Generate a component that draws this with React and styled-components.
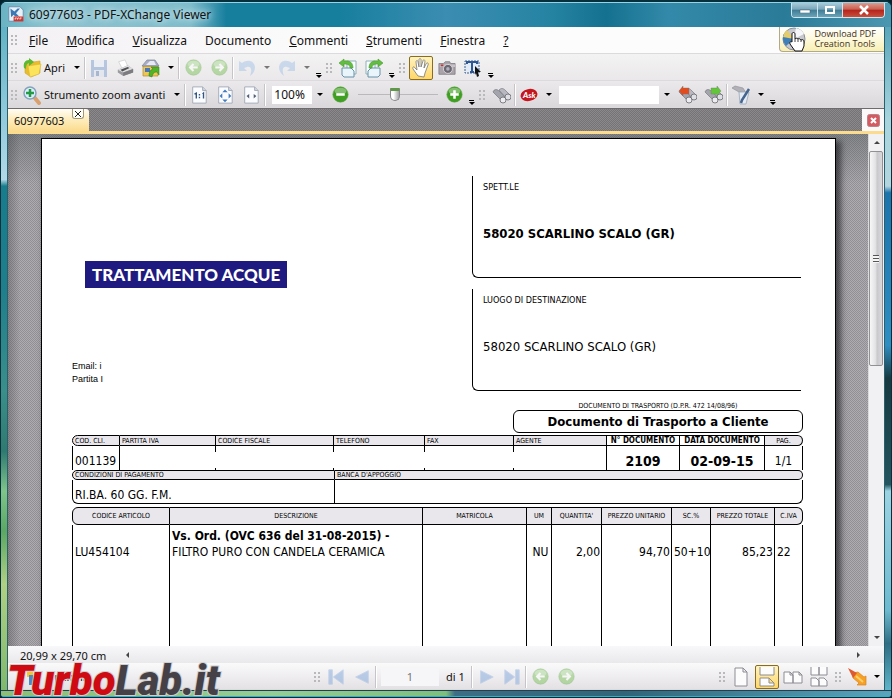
import React from 'react';
import styled, { createGlobalStyle, css } from 'styled-components';

const GlobalStyle = createGlobalStyle`
    * {
        box-sizing: border-box;
    }
    body {
        margin: 0;
        background: #04222b;
        color: #111;
        font-family: 'Noto Sans', 'Open Sans', sans-serif;
        font-size: 11px;
    }
    button, input {
        font: inherit;
        color: inherit;
    }
    button {
        border: 0;
        padding: 0;
        background: none;
    }
    svg {
        display: block;
        flex: none;
    }
`;

/* ---------- window frame ---------- */

const Window = styled.div`
    position: relative;
    display: flex;
    flex-direction: column;
    height: 100vh;
    min-height: 400px;
    overflow: hidden;
    border: 1px solid #06303c;
    border-top-width: 2px;
    border-radius: 7px 7px 4px 4px;
    background: #2a8aa6;
`;

const TitleBar = styled.header`
    display: flex;
    align-items: flex-start;
    flex: none;
    height: 25px;
    padding: 0 6px 0 7px;
    border-top: 1px solid #9ad4e4;
    background: linear-gradient(90deg, #69b3c4 0, #8fc3d0 50px, #7fbccb 190px, #177f9e 225px, #177f9e 38%, #3b8db1 50%, #2583a2 62%, #14718f 68%, #3389a9 75%, #2a7b98 88%, #4b96b0 100%);
`;

const WindowTitle = styled.h1`
    display: flex;
    align-items: center;
    gap: 5px;
    flex: 1;
    height: 22px;
    margin: 0;
    font-size: 12px;
    font-weight: 400;
    text-shadow: 0 0 6px #d8f0f5, 0 0 8px #bfe2ea;
`;

const WindowButtons = styled.div`
    display: flex;
    height: 15px;
    border: 1px solid #cfe6ee;
    border-top: 0;
    border-radius: 0 0 4px 4px;
    overflow: hidden;
`;

const WindowButton = styled.button`
    display: grid;
    place-items: center;
    width: ${p => (p.$close ? 42 : 25)}px;
    border-left: ${p => (p.$first ? '0' : '1px solid #cfe6ee')};
    background: ${p =>
        p.$close
            ? 'linear-gradient(#dd9a8e 0, #c9604f 45%, #b5221c 50%, #c8503c 100%)'
            : 'linear-gradient(#a9cbd8 0, #79a7ba 45%, #3f7c95 50%, #6ba4b8 100%)'};
`;

const Body = styled.div`
    display: flex;
    flex: 1;
    min-height: 0;
`;

const Edge = styled.div`
    flex: none;
    width: 7px;
    border: solid #2b5f6c;
    border-width: 0 ${p => (p.$right ? '0' : '1px')} 0 ${p => (p.$right ? '1px' : '0')};
    background: ${p =>
        p.$right
            ? 'linear-gradient(#5aa6ba 0, #a8d4de 14%, #b4d6de 24%, #1c74ad 25%, #2e8ec2 48%, #17393f 53%, #24555e 69%, #9cd3e2 70%, #6db9cf 88%, #2f6d83 93%, #5eb4c9 100%)'
            : 'linear-gradient(#62b2c5 0, #8cc8da 12%, #b3d9e8 23%, #177c8c 24%, #1f7f8c 40%, #3a8f8a 55%, #2f7a70 64%, #7fc489 70%, #5ba763 76%, #b0d083 84%, #7fb86d 100%)'};
`;

const BottomEdge = styled.div`
    flex: none;
    height: 7px;
    border-top: 1px solid #243f4d;
    border-bottom: 1px solid #2fb2c8;
    background: linear-gradient(90deg, #8dbd77 0, #93ce96 30%, #7dbf7f 50%, #3c6f86 51%, #316579 70%, #58a5bd 100%);
`;

const Client = styled.main`
    display: flex;
    flex-direction: column;
    flex: 1;
    min-width: 0;
    background: #f4f3f5;
`;

/* ---------- bars ---------- */

const Bar = styled.div`
    display: flex;
    align-items: center;
    flex: none;
    height: 27px;
    padding-top: 1px;
    border-bottom: 1px solid #dcdadd;
    background: ${p => p.$bg || 'linear-gradient(#f4f3f3, #eae8ea)'};
`;

const MenuBar = styled(Bar)`
    padding-top: 0;
`;

const Grip = styled.span`
    flex: none;
    width: 12px;
    height: 12px;
    background: radial-gradient(circle, #b9b8bb 1px, transparent 1px) 2px 0 / 4px 4px;
    background-clip: content-box;
    padding: 0 2px;
`;

const Sep = styled.span`
    flex: none;
    width: 2px;
    height: 22px;
    border-left: 1px solid #c6c4c8;
    border-right: 1px solid #fff;
`;

const IconButton = styled.button`
    display: grid;
    place-items: center;
    flex: none;
    width: 26px;
    height: 24px;
    opacity: ${p => (p.$dim ? 0.5 : 1)};
    ${p =>
        p.$active &&
        css`
            width: 24px;
            margin: 0 1px;
            border: 1px solid #8a6d1c;
            border-radius: 2px;
            background: linear-gradient(#fff3c0, #ffd768);
        `}
`;

const ArrowButton = styled.button`
    display: grid;
    place-items: center;
    flex: none;
    width: 14px;
    height: 22px;
    &::before {
        content: '';
        border: 3px solid transparent;
        border-top-color: ${p => (p.$dim ? '#777' : '#000')};
        border-bottom: 0;
    }
`;

const MoreButton = styled.button`
    display: flex;
    flex-direction: column;
    align-items: center;
    justify-content: flex-end;
    flex: none;
    width: 9px;
    height: 20px;
    &::before {
        content: '';
        width: 5px;
        height: 1px;
        background: #000;
    }
    &::after {
        content: '';
        margin-top: 1px;
        border: 3px solid transparent;
        border-top-color: #000;
        border-bottom: 0;
    }
`;

const LabelButton = styled.button`
    display: flex;
    align-items: center;
    gap: 2px;
    flex: none;
    height: 24px;
    padding: 0 5px 0 2px;
    white-space: nowrap;
`;

const MenuLink = styled.a`
    display: inline-block;
    padding: 1px 9px 0;
    color: inherit;
    font-size: 12px;
    line-height: 20px;
    text-decoration: none;
`;

const Promo = styled.a`
    display: flex;
    align-items: center;
    align-self: flex-start;
    gap: 7px;
    height: 25px;
    margin-left: auto;
    padding: 0 8px 0 2px;
    border: 1px solid #b1a98c;
    border-width: 0 0 1px 1px;
    border-radius: 0 0 0 4px;
    background: linear-gradient(#fff 0, #fdf9dc 50%, #f8efb4 100%);
    color: #3d2f1a;
    font-family: 'Open Sans', sans-serif;
    font-size: 9px;
    line-height: 10px;
    text-decoration: none;
`;

const Field = styled.input`
    width: ${p => p.$width}px;
    height: 18px;
    margin: 0 1px 0 ${p => p.$gap || 3}px;
    padding: 0 2px;
    border: 0;
    background: #fff;
`;

const ZoomField = styled(Field)`
    font-size: 12px;
`;

const ZoomSlider = styled.input`
    appearance: none;
    width: 80px;
    height: 18px;
    margin: 0 3px 0 5px;
    background: linear-gradient(#b9b8bb, #b9b8bb) center / 100% 1px no-repeat;
    &::-webkit-slider-thumb {
        appearance: none;
        width: 10px;
        height: 13px;
        border: 1px solid #88888c;
        border-top: 3px solid #5f9846;
        border-radius: 1px 1px 5px 5px;
        background: linear-gradient(90deg, #fff 30%, #a4a4a8 100%);
    }
`;

/* ---------- tabs ---------- */

const mesh = (a, b) => `repeating-conic-gradient(${a} 0 25%, ${b} 0 50%) 0 0 / 2px 2px`;

const TabStrip = styled.div`
    display: flex;
    align-items: stretch;
    justify-content: space-between;
    flex: none;
    height: 26px;
    border-top: 1px solid #6d6b6e;
    border-bottom: 3px solid #fbdc8f;
    background: ${mesh('#8b898b', '#757376')};
`;

const Tab = styled.div`
    display: flex;
    align-items: flex-start;
    border-radius: 0 3px 0 0;
    background: linear-gradient(#fffdf5 0, #fdeebf 45%, #fbdc8f 100%);
`;

const TabName = styled.button`
    padding: 3px 8px 0 6px;
    line-height: 18px;
`;

const TabClose = styled.button`
    display: grid;
    place-items: center;
    width: 12px;
    height: 10px;
    margin-right: 5px;
    border: 1px solid #a39879;
    border-top: 0;
    border-radius: 0 0 3px 3px;
    background: #fffef8;
`;

const CloseDocument = styled.button`
    display: grid;
    place-items: center;
    width: 22px;
    background: #fbf9fa;
`;

/* ---------- document view ---------- */

const View = styled.section`
    display: flex;
    flex: 1;
    min-height: 0;
`;

const Desk = styled.div`
    flex: 1;
    min-width: 0;
    padding: 4px 32px 0 33px;
    overflow: hidden;
    background: linear-gradient(rgba(70, 80, 80, .4), transparent 50px), linear-gradient(90deg, rgba(60, 60, 65, .35), transparent 12px), ${mesh('#aeacb0', '#918f94')};
`;

const Page = styled.article`
    min-height: 1120px;
    padding: 37px 32px 0 30px;
    border: 1px solid #000;
    background: #fff;
    box-shadow: 4px 4px 6px 1px rgba(20, 20, 25, .65);
    color: #000;
    font-family: 'DejaVu Sans Condensed', 'DejaVu Sans', sans-serif;
`;

const Scroller = styled.div`
    display: flex;
    flex-direction: column;
    flex: none;
    width: 16px;
    border-left: 1px solid #dcdadd;
    background: #f1f0f3;
`;

const ScrollArrow = styled.button`
    display: grid;
    place-items: center;
    flex: none;
    width: 15px;
    height: 17px;
    &::before {
        content: '';
        border: 3px solid transparent;
        border-${p => p.$from}-color: #444;
        border-${p => p.$flat}: 0;
    }
`;

const Track = styled.div`
    flex: 1;
`;

const Thumb = styled.div`
    display: grid;
    place-items: center;
    height: 45%;
    margin-right: 1px;
    border: 1px solid #919094;
    border-radius: 2px;
    background: linear-gradient(90deg, #f7f7f8 0, #e3e2e5 45%, #c9c8cc 60%, #dad9dc 100%);
    &::before {
        content: '';
        width: 6px;
        height: 8px;
        background: repeating-linear-gradient(#555 0 1px, #f5f5f5 1px 3px);
    }
`;

const HorizontalBar = styled.div`
    display: flex;
    align-items: center;
    flex: none;
    height: 17px;
    padding-top: 1px;
    padding-right: 18px;
    background: linear-gradient(#f8f7f9, #e9e8eb);
`;

const PageSize = styled.span`
    padding: 0 14px 0 12px;
`;

/* ---------- delivery note ---------- */

const Letterhead = styled.div`
    display: grid;
    grid-template-columns: 400fr 331fr;
`;

const Brand = styled.div`
    display: inline-block;
    margin: 85px 0 0 13px;
    padding: 0 7px;
    background: #1e1a80;
    color: #fff;
    font-family: Lato, sans-serif;
    font-size: 17px;
    font-weight: 900;
    line-height: 27px;
`;

const Contact = styled.p`
    margin: 72px 0 0;
    font-family: 'Liberation Sans', sans-serif;
    font-size: 9px;
    line-height: 13px;
`;

const AddressBox = styled.div`
    height: 102px;
    margin: 0 2px 11px 0;
    padding: 5px 10px;
    border: 1px solid #000;
    border-width: 0 0 1px 1px;
    border-radius: 0 0 0 6px;
    font-size: 13px;
    h2 {
        margin: 0 0 33px;
        font-size: 9px;
        font-weight: 400;
        line-height: 12px;
    }
    p {
        margin: 0;
        line-height: 16px;
        font-weight: ${p => (p.$bold ? 700 : 400)};
    }
`;

const Heading = styled.div`
    width: 290px;
    margin: 0 0 2px auto;
    text-align: center;
    small {
        display: block;
        font-size: 7px;
        line-height: 8px;
    }
    strong {
        display: block;
        border: 1px solid #000;
        border-radius: 6px;
        font-size: 13px;
        line-height: 21px;
    }
`;

const Table = styled.table`
    width: 100%;
    table-layout: fixed;
    border-collapse: separate;
    border-spacing: 0;
    font-size: 12px;
    th {
        height: ${p => p.$head || 11}px;
        padding: 0 2px;
        border: solid #000;
        border-width: 1px 1px 1px 0;
        background: #e9e7ec;
        font-size: 7px;
        font-weight: 400;
        line-height: 8px;
        text-align: ${p => p.$align || 'left'};
        white-space: nowrap;
    }
    th:first-child {
        border-left-width: 1px;
        border-radius: 6px 0 0 6px;
    }
    th:last-child {
        border-radius: 0 6px 6px 0;
    }
    td {
        height: 24px;
        padding: 6px 0 0 2px;
        border-right: 1px solid #000;
        line-height: 16px;
        white-space: nowrap;
    }
    td:first-child {
        border-left: 1px solid #000;
    }
`;

const StrongHead = styled.th`
    && {
        background: #fff;
        font-size: 8px;
        font-weight: 700;
        text-align: center;
    }
`;

const CenterHead = styled.th`
    && {
        text-align: center;
    }
`;

const NumberCell = styled.td`
    && {
        padding-left: 0;
        font-size: ${p => (p.$bold ? 14 : 12)}px;
        font-weight: ${p => (p.$bold ? 700 : 400)};
        text-align: center;
    }
`;

// empty cell: the divider is only hinted at both ends
const OpenCell = styled.td`
    && {
        border-right: 0;
        background:
            linear-gradient(#000, #000) right top / 1px 6px no-repeat,
            linear-gradient(#000, #000) right bottom / 1px 2px no-repeat;
    }
`;

const PaymentTable = styled(Table)`
    margin-bottom: 3px;
    td {
        border-bottom: 1px solid #000;
    }
    td:first-child {
        border-radius: 0 0 0 6px;
    }
    td:last-child {
        border-radius: 0 0 6px 0;
    }
`;

const ItemTable = styled(Table)`
    td {
        height: 600px;
        padding: 3px 2px 0;
        vertical-align: top;
        text-align: left;
    }
    td:nth-child(n + 5) {
        padding: 3px 1px 0 2px;
        text-align: right;
    }
    td:last-child {
        text-align: left;
    }
`;

/* ---------- status bar ---------- */

const StatusLeft = styled.div`
    flex: none;
    width: 303px;
    padding-left: 14px;
`;

const PageCount = styled.span`
    width: 30px;
    padding-left: 5px;
    white-space: nowrap;
`;

const Spacer = styled.span`
    flex: 1;
`;

const PageInput = styled(Field)`
    margin: 0 2px 0 4px;
    background: #f6f5f7;
    color: #777;
    text-align: center;
`;

const Watermark = styled.div`
    position: absolute;
    left: 6px;
    bottom: -1px;
    color: #cf0a12;
    font-family: Roboto, sans-serif;
    font-size: 42px;
    font-style: italic;
    font-weight: 900;
    line-height: 34px;
    paint-order: stroke fill;
    -webkit-text-stroke: 2px #cfcfcf;
    span {
        color: #454147;
    }
`;

/* ---------- drawings ---------- */

const Svg = ({ s = 20, children }) => (
    <svg width={s} height={s} viewBox='0 0 20 20' aria-hidden='true'>{children}</svg>
);

const AppIcon = () => (
    <Svg s={16}>
        <path d='M1 1h14l4 4v14H1z' fill='#e8f1f8' stroke='#5d83a6' />
        <path d='M3 3l5 4 4-4h3l-5 6 4 4H9l-2-2-3 3z' fill='#3c78b4' />
        <path d='M7 13h12v6H7z' fill='#d63228' />
        <path d='M9 17v-2h2M12 17v-2h2M15 17v-2h2' stroke='#fff' fill='none' />
    </Svg>
);

const FolderIcon = () => (
    <Svg>
        <path d='M3 5l6-3 2 2 7-1v12l-9 4-6-4z' fill='#e9bc2c' stroke='#d0a62a' strokeWidth='.6' />
        <path d='M6 8l13-2-2 10-9 3z' fill='#fbe45c' stroke='#dcb73a' strokeWidth='.6' />
        <path d='M2 10c-1-5 1-8 5-8V0l5 4-5 4V5C5 5 4 7 4 11z' fill='#5bb832' />
    </Svg>
);

const SaveIcon = () => (
    <Svg>
        <path d='M2 2h16v17H2z' fill='#7f9fcf' />
        <path d='M5 2h10v7H5z' fill='#e8eef8' />
        <path d='M5 12h10v7H5z' fill='#dbe3f0' />
        <path d='M7 13h3v5H7z' fill='#6684b4' />
    </Svg>
);

const PrintIcon = () => (
    <Svg s={18}>
        <path d='M3 3l7-2 3 7-6 3z' fill='#fff' stroke='#c5c5c8' strokeWidth='.7' />
        <path d='M2 12l11-5 6 4v4L8 19l-6-4z' fill='#9a9a9f' />
        <path d='M2 12l11-5 6 4-11 4z' fill='#dededf' />
        <path d='M5 12l8-3 2 1-8 4z' fill='#4e4e53' />
        <path d='M8 15l11-4v4L8 19z' fill='#7b7b80' />
    </Svg>
);

const HouseIcon = () => (
    <Svg>
        <path d='M2 8h15v10H2z' fill='#edc653' stroke='#b08d35' strokeWidth='.7' />
        <path d='M1 8l5-6h8l4 6z' fill='#a9aec4' stroke='#7d819a' strokeWidth='.7' />
        <path d='M5 7l4-4h4l2 4z' fill='#e8eaf2' />
        <path d='M4 10h5v4H4z' fill='#4976bb' />
        <path d='M8 18c0-4 1-6 4-7l-2-2h8v8l-2-3c-3 0-4 1-5 5z' fill='#4fb42a' stroke='#2d7d14' strokeWidth='.5' />
    </Svg>
);

const BallIcon = ({ sign, tone = '#7cc35c' }) => (
    <Svg s={17}>
        <circle cx='10' cy='10' r='9' fill={tone} stroke='#5aa142' strokeWidth='.7' />
        <ellipse cx='10' cy='6' rx='7' ry='4' fill='#fff' opacity='.35' />
        {sign === 'plus' && <path d='M10 5v10M5 10h10' stroke='#fff' strokeWidth='3' />}
        {sign === 'minus' && <path d='M5 10h10' stroke='#fff' strokeWidth='3' />}
        {sign === 'left' && <path d='M15 10H7m3-4l-4 4 4 4' stroke='#fff' strokeWidth='2.5' fill='none' />}
        {sign === 'right' && <path d='M5 10h8m-3-4l4 4-4 4' stroke='#fff' strokeWidth='2.5' fill='none' />}
    </Svg>
);

const UndoIcon = ({ flip }) => (
    <Svg>
        <g transform={flip ? 'matrix(-1 0 0 1 20 0)' : undefined}>
            <path d='M2 3l3 2c5-4 12-3 13 4 0 4-2 7-5 9 2-5 2-10-3-9l-3 1 3 3H2z' fill='#a6c3e9' />
        </g>
    </Svg>
);

const RotateIcon = ({ flip }) => (
    <Svg>
        <g transform={flip ? 'matrix(-1 0 0 1 20 0)' : undefined}>
            <path d='M9 3h9v13H9z' fill='#f8fcff' stroke='#8fb0b8' />
            <path d='M4 10h9l3 3v6H6l-2-2z' fill='#eaf5fb' stroke='#6792aa' />
            <path d='M1 5l5-4v2c6-1 9 2 9 7h-3c0-3-2-4-6-4v3z' fill='#62bd42' stroke='#4a9b30' strokeWidth='.6' />
        </g>
    </Svg>
);

const HandIcon = () => (
    <Svg>
        <path d='M7 18L2 11c-1-2 1-3 2-1l2 2-1-8c0-2 2-2 2 0l1 5V2c0-2 2-2 2 0v7l2-6c0-2 2-1 2 0l-1 7 2-4c1-2 3-1 2 1l-3 8-1 4z' fill='#fff' stroke='#777' strokeWidth='.8' />
    </Svg>
);

const CameraIcon = () => (
    <Svg s={18}>
        <path d='M1 5h5l2-2h5l1 2h5v12H1z' fill='#aaa4aa' stroke='#78747c' strokeWidth='.8' />
        <path d='M2 6h17v3H2z' fill='#c7c1c8' />
        <circle cx='11' cy='11' r='5' fill='#6c6870' stroke='#dcd8dd' />
        <circle cx='11' cy='11' r='2' fill='#b2afc0' />
        <path d='M3 7h3' stroke='#b83a3a' strokeWidth='2' />
    </Svg>
);

const SelectIcon = () => (
    <Svg>
        <path d='M2 3h14v12H2z' fill='#e3ebf6' stroke='#3e5f91' strokeDasharray='2 1' />
        <path d='M4 6V4h10v2M9 4v10M7 14h4' stroke='#2e5794' strokeWidth='2' fill='none' />
        <path d='M12 8l6 6h-3l1 4-2 1-1-4-1 2z' fill='#111' />
    </Svg>
);

const MagnifierIcon = () => (
    <Svg>
        <path d='M12 12l5 6' stroke='#d9a06e' strokeWidth='4' strokeLinecap='round' />
        <circle cx='8' cy='8' r='6' fill='#dceefb' stroke='#86a3bd' strokeWidth='1.5' />
        <path d='M8 4v8M4 8h8' stroke='#249a45' strokeWidth='2.5' />
    </Svg>
);

const ZoomPageIcon = ({ kind }) => (
    <Svg s={18}>
        <path d='M3 1h11l4 4v14H3z' fill='#fafcff' stroke='#a2a9b5' />
        <path d='M14 1v4h4' fill='#cfd6e0' stroke='#a2a9b5' />
        {kind === 'actual' && <path d='M5 9l2-1v6M14 9l1-1v6M10.500 9v1.500M10.500 12v1.500' stroke='#33557f' strokeWidth='1.500' fill='none' />}
        {kind === 'fit' && <path d='M10 4l3 3H7zM10 18l3-3H7zM4 11l3-3v6zM17 11l-3-3v6z' fill='#427cc0' />}
        {kind === 'width' && <path d='M5 11l3-2v5zM16 11l-3-2v5z' fill='#555f70' />}
    </Svg>
);

const BinocularsIcon = ({ badge }) => (
    <Svg>
        <path d='M2 7c1-3 4-3 6-1l7 6-3 5z' fill='#a4a4ac' stroke='#6b6b73' strokeWidth='.6' />
        <path d='M8 5c2-2 4-2 6 0l5 5-3 4z' fill='#b8b8c0' stroke='#6b6b73' strokeWidth='.6' />
        <circle cx='12' cy='15' r='3' fill='#ececf1' stroke='#66666d' strokeWidth='.8' />
        <circle cx='17' cy='12' r='3' fill='#dedee5' stroke='#66666d' strokeWidth='.8' />
        {badge && <path d={badge === 'red' ? 'M2 6l4-5v2h6v6H6v2z' : 'M18 6l-4-5v2H8v6h6v2z'} fill={badge === 'red' ? '#e34d1e' : '#62c63a'} stroke='#777' strokeWidth='.4' />}
    </Svg>
);

const AskIcon = () => (
    <svg width='18' height='14' viewBox='0 0 18 14' aria-hidden='true'>
        <ellipse cx='9' cy='7' rx='8.500' ry='6' fill='#c5161d' transform='rotate(-12 9 7)' />
        <text x='3' y='10' fill='#fff' fontFamily='Lato, sans-serif' fontSize='8' fontStyle='italic' fontWeight='900'>Ask</text>
    </svg>
);

const PenIcon = () => (
    <Svg>
        <path d='M1 3l3-2 8 2 3 5-7-1z' fill='#b1b1b7' stroke='#95959c' strokeWidth='.7' />
        <path d='M8 7h10l-3 12H9z' fill='#e4ebf4' stroke='#9aa7b9' strokeWidth='.8' />
        <path d='M18 4l-7 11-1 3' stroke='#45648f' strokeWidth='2.500' fill='none' />
    </Svg>
);

const DiscIcon = () => (
    <svg width='25' height='25' viewBox='0 0 25 25' aria-hidden='true'>
        <circle cx='12' cy='12' r='11' fill='#c7c9cf' stroke='#8b8f98' />
        <path d='M12 12L2 7a11 11 0 0 0 2 12z' fill='#3f7fb8' />
        <path d='M12 12L5 3a11 11 0 0 0-4 7z' fill='#e3cc6b' />
        <path d='M12 12L14 1a11 11 0 0 1 8 6z' fill='#f4f6fa' />
        <path d='M10 15V7c0-2 3-2 3 0v5c1-1 2-1 3 0 1-1 2 0 3 1 2-1 3 0 3 2v4l-2 5h-7l-5-7c-1-2 1-3 2-2z' fill='#fff' stroke='#111' />
        <path d='M13 12v3M16 12v3M19 13v2' stroke='#111' strokeWidth='.8' />
    </svg>
);

const StepIcon = ({ d }) => (
    <Svg s={18}><path d={d} fill='#7fa6dc' stroke='#9cb9e2' /></Svg>
);

const SheetIcon = ({ kind }) => (
    <Svg>
        <g fill='#fcfcfd' stroke='#8d8c92'>
            {kind === 'single' && <path d='M4 1h8l4 4v14H4zM12 1v4h4' />}
            {kind === 'flow' && <path d='M3 0v8h14V0M3 19v-8h9l5 5v3zM12 11v5h5' />}
            {kind === 'facing' && <path d='M1 5h6l3 3v8H1zM10 5h6l3 3v8h-9zM7 5v3h3M16 5v3h3' />}
            {kind === 'facingFlow' && <path d='M2 0v8h8V0M10 0v8h8V0M2 19v-8h5l3 3v5zM10 19v-8h5l3 3v5z' />}
        </g>
    </Svg>
);

const PointerIcon = () => (
    <Svg>
        <path d='M6 6l5-1 6 5 2-1v9h-9l2-2-6-5z' fill='#f6a025' stroke='#d98424' strokeWidth='.7' />
        <path d='M1 1l9 5-4 5z' fill='#dd5a30' />
        <path d='M9 9l7 6' stroke='#ffd06a' strokeWidth='2' />
    </Svg>
);

/* ---------- content ---------- */

// the underlined letter is the keyboard mnemonic
const menus = [
    ['F', 'ile'],
    ['M', 'odifica'],
    ['V', 'isualizza'],
    ['', 'Documento'],
    ['C', 'ommenti'],
    ['S', 'trumenti'],
    ['F', 'inestra'],
    ['?', '']
];

const Columns = ({ widths }) => {
    const total = widths.reduce((a, b) => a + b, 0);
    return (
        <colgroup>
            {widths.map((w, i) => <col key={i} style={{ width: `${(w / total) * 100}%` }} />)}
        </colgroup>
    );
};

const DeliveryNote = () => (
    <Page>
        <Letterhead>
            <div>
                <Brand>TRATTAMENTO ACQUE</Brand>
                <Contact>Email: i<br />Partita I</Contact>
            </div>
            <div>
                <AddressBox $bold>
                    <h2>SPETT.LE</h2>
                    <p>58020 SCARLINO SCALO (GR)</p>
                </AddressBox>
                <AddressBox>
                    <h2>LUOGO DI DESTINAZIONE</h2>
                    <p>58020 SCARLINO SCALO (GR)</p>
                </AddressBox>
            </div>
        </Letterhead>
        <Heading>
            <small>DOCUMENTO DI TRASPORTO (D.P.R. 472 14/08/96)</small>
            <strong>Documento di Trasporto a Cliente</strong>
        </Heading>
        <Table>
            <Columns widths={[48, 96, 118, 91, 89, 93, 73, 85, 38]} />
            <thead>
                <tr>
                    <th>COD. CLI.</th>
                    <th>PARTITA IVA</th>
                    <th>CODICE FISCALE</th>
                    <th>TELEFONO</th>
                    <th>FAX</th>
                    <th>AGENTE</th>
                    <StrongHead>N° DOCUMENTO</StrongHead>
                    <StrongHead>DATA DOCUMENTO</StrongHead>
                    <CenterHead>PAG.</CenterHead>
                </tr>
            </thead>
            <tbody>
                <tr>
                    <td>001139</td>
                    <OpenCell />
                    <OpenCell />
                    <OpenCell />
                    <OpenCell />
                    <td />
                    <NumberCell $bold>2109</NumberCell>
                    <NumberCell $bold>02-09-15</NumberCell>
                    <NumberCell>1/1</NumberCell>
                </tr>
            </tbody>
        </Table>
        <PaymentTable $head={10}>
            <Columns widths={[263, 468]} />
            <thead>
                <tr>
                    <th>CONDIZIONI DI PAGAMENTO</th>
                    <th>BANCA D'APPOGGIO</th>
                </tr>
            </thead>
            <tbody>
                <tr>
                    <td>RI.BA. 60 GG. F.M.</td>
                    <td />
                </tr>
            </tbody>
        </PaymentTable>
        <ItemTable $head={18} $align='center'>
            <Columns widths={[98, 253, 104, 25, 50, 70, 39, 64, 28]} />
            <thead>
                <tr>
                    <th>CODICE ARTICOLO</th>
                    <th>DESCRIZIONE</th>
                    <th>MATRICOLA</th>
                    <th>UM</th>
                    <th>QUANTITA'</th>
                    <th>PREZZO UNITARIO</th>
                    <th>SC.%</th>
                    <th>PREZZO TOTALE</th>
                    <th>C.IVA</th>
                </tr>
            </thead>
            <tbody>
                <tr>
                    <td><br />LU454104</td>
                    <td><b>Vs. Ord. (OVC 636 del 31-08-2015) -</b><br />FILTRO PURO CON CANDELA CERAMICA</td>
                    <td />
                    <td><br />&nbsp;NU</td>
                    <td><br />2,00</td>
                    <td><br />94,70</td>
                    <td><br />50+10</td>
                    <td><br />85,23</td>
                    <td><br />22</td>
                </tr>
            </tbody>
        </ItemTable>
    </Page>
);

const MainToolbar = () => (
    <Bar>
        <Grip />
        <LabelButton><FolderIcon />Apri</LabelButton>
        <ArrowButton aria-label='Apri recenti' />
        <Sep />
        <IconButton $dim aria-label='Salva'><SaveIcon /></IconButton>
        <IconButton aria-label='Stampa'><PrintIcon /></IconButton>
        <IconButton aria-label='Esporta'><HouseIcon /></IconButton>
        <ArrowButton aria-label='Altre esportazioni' />
        <Sep />
        <IconButton $dim aria-label='Indietro'><BallIcon sign='left' /></IconButton>
        <IconButton $dim aria-label='Avanti'><BallIcon sign='right' /></IconButton>
        <Sep />
        <IconButton $dim aria-label='Annulla'><UndoIcon /></IconButton>
        <ArrowButton $dim aria-label='Cronologia annulla' />
        <IconButton $dim aria-label='Ripeti'><UndoIcon flip /></IconButton>
        <ArrowButton $dim aria-label='Cronologia ripeti' />
        <MoreButton aria-label='Altro' />
        <Grip />
        <IconButton aria-label='Ruota a sinistra'><RotateIcon /></IconButton>
        <IconButton aria-label='Ruota a destra'><RotateIcon flip /></IconButton>
        <MoreButton aria-label='Altro' />
        <Grip />
        <IconButton $active aria-label='Mano'><HandIcon /></IconButton>
        <IconButton aria-label='Istantanea'><CameraIcon /></IconButton>
        <IconButton aria-label='Seleziona testo'><SelectIcon /></IconButton>
        <MoreButton aria-label='Altro' />
    </Bar>
);

const ZoomToolbar = () => (
    <Bar $bg='linear-gradient(#ebe9eb, #dad8db)'>
        <Grip />
        <LabelButton><MagnifierIcon />Strumento zoom avanti</LabelButton>
        <ArrowButton aria-label='Strumenti zoom' />
        <Sep />
        <IconButton aria-label='Dimensione reale'><ZoomPageIcon kind='actual' /></IconButton>
        <IconButton aria-label='Adatta pagina'><ZoomPageIcon kind='fit' /></IconButton>
        <IconButton aria-label='Adatta larghezza'><ZoomPageIcon kind='width' /></IconButton>
        <Sep />
        <ZoomField $width={40} $gap={6} defaultValue='100%' aria-label='Zoom' />
        <ArrowButton aria-label='Livelli di zoom' />
        <IconButton aria-label='Riduci'><BallIcon sign='minus' tone='#3f9f22' /></IconButton>
        <ZoomSlider type='range' defaultValue='45' aria-label='Zoom' />
        <IconButton aria-label='Ingrandisci'><BallIcon sign='plus' tone='#3f9f22' /></IconButton>
        <MoreButton aria-label='Altro' />
        <Grip />
        <IconButton aria-label='Trova'><BinocularsIcon /></IconButton>
        <Sep />
        <IconButton aria-label='Ask'><AskIcon /></IconButton>
        <ArrowButton aria-label='Motori di ricerca' />
        <Field $width={100} aria-label='Cerca' />
        <ArrowButton aria-label='Ricerche recenti' />
        <IconButton aria-label='Trova precedente'><BinocularsIcon badge='red' /></IconButton>
        <IconButton aria-label='Trova successivo'><BinocularsIcon badge='green' /></IconButton>
        <Sep />
        <IconButton aria-label='Opzioni ricerca'><PenIcon /></IconButton>
        <ArrowButton aria-label='Altre opzioni' />
        <MoreButton aria-label='Altro' />
    </Bar>
);

const StatusBar = () => (
    <Bar $bg='linear-gradient(#fbfafb, #e3e1e4)'>
        <StatusLeft>
            <LabelButton>
                <Svg><path d='M3 2h6v8H3z' fill='#f2c62c' /><path d='M5 8h4v10H5z' fill='#4f86c6' /></Svg>
                Opzioni
            </LabelButton>
        </StatusLeft>
        <Grip />
        <IconButton $dim aria-label='Prima pagina'><StepIcon d='M2 2h4v16H2zM18 2v16L7 10z' /></IconButton>
        <IconButton $dim aria-label='Pagina precedente'><StepIcon d='M17 3v14L3 10z' /></IconButton>
        <Sep />
        <PageInput $width={58} defaultValue='1' aria-label='Pagina' />
        <PageCount>di 1</PageCount>
        <Sep />
        <IconButton $dim aria-label='Pagina successiva'><StepIcon d='M4 3v14l14-7z' /></IconButton>
        <IconButton $dim aria-label='Ultima pagina'><StepIcon d='M14 2h4v16h-4zM2 2v16l11-8z' /></IconButton>
        <Sep />
        <IconButton $dim aria-label='Vista precedente'><BallIcon sign='left' /></IconButton>
        <IconButton $dim aria-label='Vista successiva'><BallIcon sign='right' /></IconButton>
        <Spacer />
        <Grip />
        <IconButton aria-label='Pagina singola'><SheetIcon kind='single' /></IconButton>
        <IconButton $active aria-label='Continua'><SheetIcon kind='flow' /></IconButton>
        <IconButton aria-label='Pagine affiancate'><SheetIcon kind='facing' /></IconButton>
        <IconButton aria-label='Affiancate continue'><SheetIcon kind='facingFlow' /></IconButton>
        <Grip />
        <IconButton aria-label='Avvio rapido'><PointerIcon /></IconButton>
        <ArrowButton aria-label='Altri avvii' />
    </Bar>
);

const App = () => (
    <>
        <GlobalStyle />
        <Window>
            <TitleBar>
                <WindowTitle><AppIcon />60977603 - PDF-XChange Viewer</WindowTitle>
                <WindowButtons>
                    <WindowButton $first aria-label='Riduci a icona'>
                        <svg width='12' height='6' viewBox='0 0 12 6'><path d='M1 3h10v3H1z' fill='#fff' stroke='#456' strokeWidth='.5' /></svg>
                    </WindowButton>
                    <WindowButton aria-label='Ingrandisci'>
                        <svg width='12' height='10' viewBox='0 0 12 10'><path d='M2 2h8v6H2z' fill='none' stroke='#fff' strokeWidth='2' /></svg>
                    </WindowButton>
                    <WindowButton $close aria-label='Chiudi'>
                        <svg width='12' height='10' viewBox='0 0 12 10'><path d='M2 1l8 8M10 1L2 9' stroke='#fff' strokeWidth='2.500' /></svg>
                    </WindowButton>
                </WindowButtons>
            </TitleBar>
            <Body>
                <Edge />
                <Client>
                    <MenuBar $bg='linear-gradient(90deg, #f3f1f3, #fdfcfd 40%)'>
                        <Grip />
                        <nav>
                            {menus.map(([key, rest]) => (
                                <MenuLink key={key + rest} href='#'>{key && <u>{key}</u>}{rest}</MenuLink>
                            ))}
                        </nav>
                        <Promo href='#'>
                            <DiscIcon />
                            <span>Download PDF<br />Creation Tools</span>
                        </Promo>
                    </MenuBar>
                    <MainToolbar />
                    <ZoomToolbar />
                    <TabStrip>
                        <Tab>
                            <TabName>60977603</TabName>
                            <TabClose aria-label='Chiudi scheda'>
                                <svg width='6' height='6' viewBox='0 0 6 6'><path d='M0 0l6 6M6 0L0 6' stroke='#222' /></svg>
                            </TabClose>
                        </Tab>
                        <CloseDocument aria-label='Chiudi documento'>
                            <svg width='13' height='13' viewBox='0 0 13 13'>
                                <rect x='.5' y='.5' width='12' height='12' rx='2' fill='#d55a62' stroke='#b98488' />
                                <path d='M4 4l5 5M9 4L4 9' stroke='#fff' strokeWidth='2' />
                            </svg>
                        </CloseDocument>
                    </TabStrip>
                    <View>
                        <Desk><DeliveryNote /></Desk>
                        <Scroller>
                            <ScrollArrow $from='bottom' $flat='top' aria-label='Scorri su' />
                            <Track><Thumb /></Track>
                            <ScrollArrow $from='top' $flat='bottom' aria-label='Scorri giù' />
                        </Scroller>
                    </View>
                    <HorizontalBar>
                        <PageSize>20,99 x 29,70 cm</PageSize>
                        <ScrollArrow $from='right' $flat='left' aria-label='Scorri a sinistra' />
                        <Spacer />
                        <ScrollArrow $from='left' $flat='right' aria-label='Scorri a destra' />
                    </HorizontalBar>
                    <StatusBar />
                </Client>
                <Edge $right />
            </Body>
            <BottomEdge />
            <Watermark>Turbo<span>Lab.it</span></Watermark>
        </Window>
    </>
);

export default App;
